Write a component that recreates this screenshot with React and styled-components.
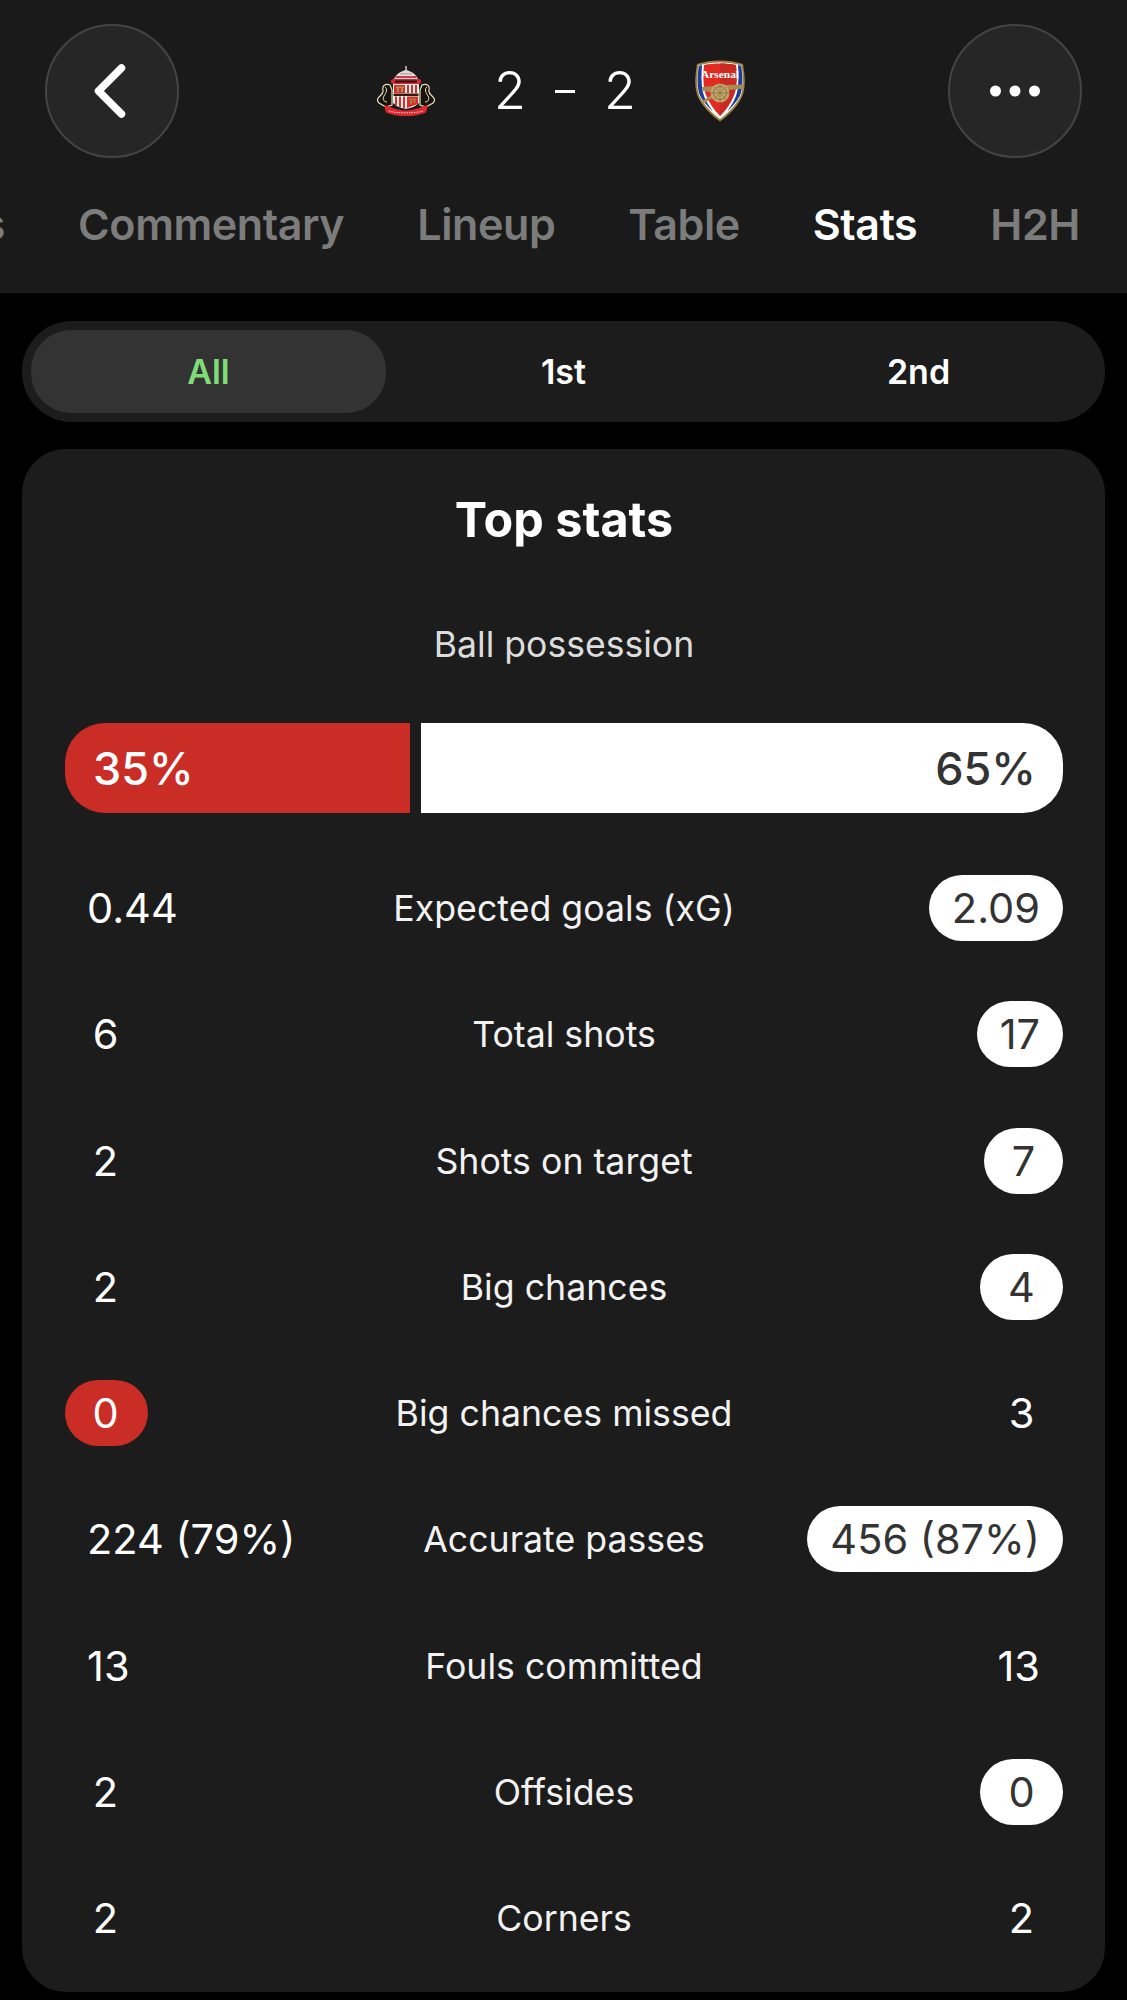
import React from 'react';
import styled, { createGlobalStyle } from 'styled-components';

const GlobalStyle = createGlobalStyle`
  html, body {
    margin: 0;
    background: #000;
  }
  body {
    font-family: Inter, "Noto Sans", "Liberation Sans", sans-serif;
    color: #fff;
  }
`;

const Page = styled.div`
  width: 1127px;
  height: 2000px;
  overflow: hidden;
  background: #000;
`;

const Header = styled.header`
  height: 293px;
  box-sizing: border-box;
  padding-top: 24px;
  background: #1a1a1a;
`;

const TopRow = styled.div`
  display: grid;
  grid-template-columns: 134px 1fr 134px;
  align-items: center;
  padding: 0 45px;
`;

const RoundButton = styled.button`
  width: 134px;
  height: 134px;
  padding: 0 ${(p) => p.$nudge || 0}px 0 0;
  display: flex;
  align-items: center;
  justify-content: center;
  background: #272627;
  border: 2px solid #454445;
  border-radius: 50%;
  box-sizing: border-box;
`;

const Match = styled.div`
  display: flex;
  align-items: center;
  justify-content: center;
  gap: 54px;
  padding-right: 5px;
`;

const Score = styled.div`
  display: flex;
  align-items: center;
  gap: 25px;
  font-size: 52px;
  font-weight: 300;
  line-height: 1;
`;

const ScoreDigit = styled.span`
  width: 40px;
  text-align: center;
`;

const ScoreDash = styled.span`
  width: 20px;
  height: 3px;
  background: #fff;
`;

const TabStrip = styled.nav`
  display: flex;
  justify-content: flex-end;
  align-items: center;
  gap: 73px;
  height: 66px;
  margin-top: 33px;
  padding-right: 47px;
  overflow: hidden;
`;

const Tab = styled.span`
  flex-shrink: 0;
  font-size: 43px;
  font-weight: 600;
  letter-spacing: -0.4px;
  color: ${(p) => (p.$active ? '#ffffff' : '#7c7c7c')};
`;

const Main = styled.main`
  padding: 28px 22px 8px;
`;

const Segments = styled.div`
  display: grid;
  grid-template-columns: repeat(3, 1fr);
  height: 101px;
  padding: 9px;
  box-sizing: border-box;
  background: #1c1c1c;
  border-radius: 50px;
`;

const Segment = styled.div`
  display: flex;
  align-items: center;
  justify-content: center;
  font-size: 34px;
  font-weight: 600;
  border-radius: 40px;
  color: ${(p) => (p.$active ? '#7fdc78' : '#ffffff')};
  background: ${(p) => (p.$active ? '#333333' : 'transparent')};
`;

const Card = styled.section`
  height: 1543px;
  box-sizing: border-box;
  margin-top: 27px;
  padding: 0 42px 0 43px;
  background: #1c1c1c;
  border-radius: 44px;
`;

const Title = styled.h2`
  margin: 0;
  height: 142px;
  line-height: 142px;
  font-size: 48.5px;
  font-weight: 700;
  text-align: center;
`;

const BarLabel = styled.div`
  height: 66px;
  margin-top: 21px;
  line-height: 66px;
  font-size: 35.6px;
  font-weight: 400;
  text-align: center;
  color: #dcdcdc;
`;

const Possession = styled.div`
  display: flex;
  gap: 11px;
  height: 90px;
  margin-top: 45px;
`;

const Share = styled.div`
  flex: 0 0 calc((100% - 11px) * ${(p) => p.$share / 100});
  box-sizing: border-box;
  display: flex;
  align-items: center;
  justify-content: ${(p) => (p.$side === 'home' ? 'flex-start' : 'flex-end')};
  padding: ${(p) => (p.$side === 'home' ? '0 0 0 28px' : '0 27px 0 0')};
  font-size: 45px;
  font-weight: 500;
  color: ${(p) => (p.$side === 'home' ? '#ffffff' : '#333333')};
  background: ${(p) => (p.$side === 'home' ? '#c92d25' : '#ffffff')};
  border-radius: ${(p) => (p.$side === 'home' ? '40px 0 0 40px' : '0 40px 40px 0')};
`;

const StatList = styled.div`
  display: grid;
  grid-auto-rows: 66px;
  row-gap: 60.3px;
  margin-top: 62px;
`;

const StatRow = styled.div`
  display: grid;
  grid-template-columns: 1fr auto 1fr;
  align-items: center;
`;

const StatLabel = styled.div`
  font-size: 35.7px;
  text-align: center;
  color: #f2f2f2;
`;

const StatValue = styled.div`
  justify-self: ${(p) => (p.$side === 'home' ? 'start' : 'end')};
  display: flex;
  align-items: center;
  justify-content: center;
  height: 66px;
  min-width: ${(p) => p.$minWidth || 83}px;
  box-sizing: border-box;
  padding: ${(p) => (p.$side === 'home' ? '0 24px 0 22px' : '0 23px')};
  font-size: 41.5px;
  border-radius: 33px;
  color: ${(p) => (p.$win && p.$side === 'away' ? '#333333' : '#ffffff')};
  background: ${(p) => {
    if (!p.$win) return 'transparent';
    return p.$side === 'home' ? '#c92d25' : '#ffffff';
  }};
`;

const BackIcon = () => (
  <svg width="36" height="58" viewBox="0 0 36 58" fill="none">
    <path d="M29.5 6 L6.5 29 L29.5 52" stroke="#fff" strokeWidth="7.5" strokeLinecap="round" strokeLinejoin="round" />
  </svg>
);

const MoreIcon = () => (
  <svg width="50" height="12" viewBox="0 0 50 12" fill="#fff">
    <circle cx="5.5" cy="6" r="5.5" />
    <circle cx="25" cy="6" r="5.5" />
    <circle cx="44.5" cy="6" r="5.5" />
  </svg>
);

const SunderlandCrest = () => (
  <svg width="60" height="50" viewBox="0 0 60 50">
    {/* lions, drawn as cream outlines on a dark body */}
    <path d="M14 19 C9 17 6 20 7 24 C8 27 5 29 3 31 C1 33 1 35 3 37 L10 41 L16 39 L16 24 Z" fill="#17130f" stroke="#e8dfb6" strokeWidth="1.2" />
    <path d="M9 21 C12 23 10 27 8 30 C6 33 8 36 11 36" fill="none" stroke="#e8dfb6" strokeWidth="1" />
    <path d="M46 19 C51 17 54 20 53 24 C52 27 55 29 57 31 C59 33 59 35 57 37 L50 41 L44 39 L44 24 Z" fill="#17130f" stroke="#e8dfb6" strokeWidth="1.2" />
    <path d="M51 21 C48 23 50 27 52 30 C54 33 52 36 49 36" fill="none" stroke="#e8dfb6" strokeWidth="1" />
    {/* spire and crown */}
    <rect x="29.3" y="0" width="1.4" height="6" fill="#d8d2cc" />
    <path d="M30 4 C35 5 40 8 42 13 L18 13 C20 8 25 5 30 4 Z" fill="#e9d9d9" />
    <path d="M20 10 H40 L41 12 H19 Z" fill="#c9404a" />
    <path d="M24 7 H36 V8.5 H24 Z" fill="#b9b0b0" />
    <rect x="15" y="13" width="30" height="5" rx="2" fill="#d9252f" />
    <path d="M19 14.5 H41 V16.5 H19 Z" fill="#1b1514" />
    {/* shield */}
    <path d="M17 18 H43 V37 C39 41 34 42 30 43 C26 42 21 41 17 37 Z" fill="#f6f1e8" />
    <path d="M18 19 H29 V27 H18 Z" fill="#d92c30" />
    <path d="M20 20.5 H28 V22 H20 Z M21 22 H23 V26 H21 Z M25 22 H27 V26 H25 Z" fill="#b58c4a" />
    <path d="M31 19 H33 V27 H31 Z M35 19 H37 V27 H35 Z M39 19 H41 V27 H39 Z" fill="#d92c30" />
    <path d="M17.5 27.5 H42.5 V30 H17.5 Z" fill="#2a1c12" />
    <path d="M19 30.5 H21 V39 H19 Z M23 30.5 H25 V41 H23 Z M27 30.5 H29 V42 H27 Z" fill="#d92c30" />
    <path d="M31 30.5 H42 V38 L31 42 Z" fill="#d92c30" />
    <path d="M33 32.5 H40 V34 H33 Z M34 34 H36 V38 H34 Z M37.5 34 H39.5 V37 H37.5 Z" fill="#a97c3f" />
    {/* ribbon */}
    <path d="M8 39 C14 40 20 44.5 30 44.5 C40 44.5 46 40 52 39 L50 46.5 C42 49.5 36 50 30 50 C24 50 18 49.5 10 46.5 Z" fill="#e0272f" />
    <path d="M13 45 C20 47.5 40 47.5 47 45" stroke="#f7d9d9" strokeWidth="1" strokeDasharray="1.5 1" fill="none" />
  </svg>
);

const ArsenalCrest = () => (
  <svg width="52" height="62" viewBox="0 0 52 62">
    <path d="M26 0.5 C34 0.5 42 1.5 49 4 C51 16 52 28 48 37 C44 46 35 55 26 61.5 C17 55 8 46 4 37 C0 28 1 16 3 4 C10 1.5 18 0.5 26 0.5 Z" fill="#9c7f45" />
    <path d="M26 2.5 C34 2.5 41 3.5 47.5 5.5 C49 16 50 27 46.5 36 C42 45 34 53 26 59 C18 53 10 45 5.5 36 C2 27 3 16 4.5 5.5 C11 3.5 18 2.5 26 2.5 Z" fill="#ffffff" />
    <path d="M8 5 L4.8 6 C3.4 16 2.6 27 6 35.5 C9 41.5 14 47 19 51.5 C14 45 10 38 8.6 31 C7.2 22 7.4 13 8 5 Z" fill="#1c3f94" />
    <path d="M44 5 L47.2 6 C48.6 16 49.4 27 46 35.5 C43 41.5 38 47 33 51.5 C38 45 42 38 43.4 31 C44.8 22 44.6 13 44 5 Z" fill="#1c3f94" />
    <path d="M26 3.5 C32 3.5 37 4 42 5 C43 17 43 27 40 35 C37 43 32 50 26 56 C20 50 15 43 12 35 C9 27 9 17 10 5 C15 4 20 3.5 26 3.5 Z" fill="#e22a23" />
    <path d="M26 3.5 C32 3.5 37 4 42 5 C43 17 43 27 40 35 C37 43 32 50 26 56 Z" fill="#c92a22" />
    <text x="26" y="18" textAnchor="middle" fontFamily='"Liberation Serif", serif' fontWeight="700" fontSize="10.5" fill="#fff" textLength="38" lengthAdjust="spacingAndGlyphs">Arsenal</text>
    <path d="M8 27 L30 25 L50 24.5 L50 28.5 L36 30 L24 33 L9 31 Z" fill="#a88b52" />
    <path d="M22 34 L8 43" stroke="#a88b52" strokeWidth="3" />
    <circle cx="26" cy="33" r="9.5" fill="#bfa56f" />
    <circle cx="26" cy="33" r="6.5" fill="none" stroke="#8d7239" strokeWidth="1" />
    <path d="M26 24 V42 M17 33 H35 M20 27 L32 39 M32 27 L20 39" stroke="#8d7239" strokeWidth="0.8" />
  </svg>
);

const stats = [
  { label: 'Expected goals (xG)', home: '0.44', away: '2.09', winner: 'away' },
  { label: 'Total shots', home: '6', away: '17', winner: 'away' },
  { label: 'Shots on target', home: '2', away: '7', winner: 'away', awayWidth: 79 },
  { label: 'Big chances', home: '2', away: '4', winner: 'away' },
  { label: 'Big chances missed', home: '0', away: '3', winner: 'home' },
  { label: 'Accurate passes', home: '224 (79%)', away: '456 (87%)', winner: 'away' },
  { label: 'Fouls committed', home: '13', away: '13' },
  { label: 'Offsides', home: '2', away: '0', winner: 'away' },
  { label: 'Corners', home: '2', away: '2' },
];

const tabs = ['Facts', 'Commentary', 'Lineup', 'Table', 'Stats', 'H2H'];

const App = () => {
  return (
    <Page>
      <GlobalStyle />
      <Header>
        <TopRow>
          <RoundButton $nudge={5} aria-label="Back"><BackIcon /></RoundButton>
          <Match>
            <SunderlandCrest />
            <Score>
              <ScoreDigit>2</ScoreDigit>
              <ScoreDash />
              <ScoreDigit>2</ScoreDigit>
            </Score>
            <ArsenalCrest />
          </Match>
          <RoundButton aria-label="More"><MoreIcon /></RoundButton>
        </TopRow>
        <TabStrip>
          {tabs.map((t) => (
            <Tab key={t} $active={t === 'Stats'}>{t}</Tab>
          ))}
        </TabStrip>
      </Header>
      <Main>
        <Segments>
          <Segment $active>All</Segment>
          <Segment>1st</Segment>
          <Segment>2nd</Segment>
        </Segments>
        <Card>
          <Title>Top stats</Title>
          <BarLabel>Ball possession</BarLabel>
          <Possession>
            <Share $side="home" $share={35}>35%</Share>
            <Share $side="away" $share={65}>65%</Share>
          </Possession>
          <StatList>
            {stats.map((s) => (
              <StatRow key={s.label}>
                <StatValue $side="home" $win={s.winner === 'home'}>{s.home}</StatValue>
                <StatLabel>{s.label}</StatLabel>
                <StatValue $side="away" $win={s.winner === 'away'} $minWidth={s.awayWidth}>{s.away}</StatValue>
              </StatRow>
            ))}
          </StatList>
        </Card>
      </Main>
    </Page>
  );
};

export default App;
